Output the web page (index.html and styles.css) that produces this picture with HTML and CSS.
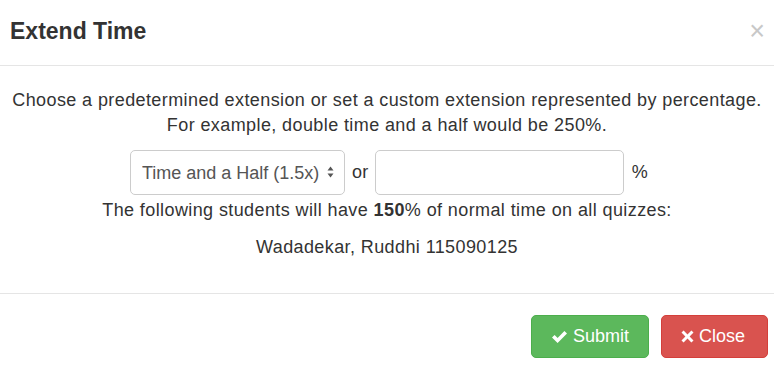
FILE: index.html
```html
<!DOCTYPE html>
<html lang="en">
<head>
    <meta charset="UTF-8">
    <title>Extend Time</title>
    <link rel="stylesheet" href="styles.css">
</head>
<body>
    <div class="modal">
        <!-- Cabeçalho -->
        <div class="modal-header">
            <h4 class="modal-title">Extend Time</h4>
            <button class="close" type="button">&times;</button>
        </div>

        <!-- Corpo -->
        <div class="modal-body">
            <p class="intro">Choose a predetermined extension or set a custom extension represented by percentage.<br>For example, double time and a half would be 250%.</p>

            <div class="extension-row">
                <div class="select-wrap">
                    <select class="form-control">
                        <option>Time and a Half (1.5x)</option>
                        <option>Double Time (2x)</option>
                    </select>
                    <svg class="select-arrows" width="7" height="12" viewBox="0 0 7 12">
                        <path d="M3.5 0.5 L6.5 4.5 H0.5 Z" fill="#555"/>
                        <path d="M3.5 11.5 L6.5 7.5 H0.5 Z" fill="#555"/>
                    </svg>
                </div>
                <span class="or">or</span>
                <input type="text" class="form-control custom">
                <span class="pct">%</span>
            </div>

            <p class="summary">The following students will have <b>150</b>% of normal time on all quizzes:</p>
            <p class="students">Wadadekar, Ruddhi 115090125</p>
        </div>

        <!-- Rodapé com os botões -->
        <div class="modal-footer">
            <button class="btn btn-success" type="button">
                <svg width="17" height="14" viewBox="0 0 17 14"><path d="M1 7.5 L3.6 5 L6.6 8 L13.4 1 L16 3.6 L6.6 13 Z" fill="#fff"/></svg>
                Submit
            </button>
            <button class="btn btn-danger" type="button">
                <svg width="13" height="13" viewBox="0 0 13 13"><path d="M2.6 0.5 L6.5 4.4 L10.4 0.5 L12.5 2.6 L8.6 6.5 L12.5 10.4 L10.4 12.5 L6.5 8.6 L2.6 12.5 L0.5 10.4 L4.4 6.5 L0.5 2.6 Z" fill="#fff"/></svg>
                Close
            </button>
        </div>
    </div>
</body>
</html>
```

FILE: styles.css
```css
body {
    margin: 0;
    font-family: "Liberation Sans", Arial, sans-serif;
    color: #333;
    background: #fff;
}

.modal {
    width: 774px;
    height: 368px;
    background: #fff;
}

/* Cabeçalho */
.modal-header {
    height: 66px;
    box-sizing: border-box;
    padding: 0 9px 0 10px;
    border-bottom: 1px solid #e5e5e5;
    display: flex;
    align-items: center;
    justify-content: space-between;
}

.modal-title {
    margin: 0;
    font-size: 23px;
    font-weight: bold;
    color: #333;
    padding-bottom: 2px;
}

.close {
    border: none;
    background: none;
    padding: 0 0 2px;
    font-family: "Liberation Sans", Arial, sans-serif;
    font-size: 27px;
    color: #c8c8c8;
    cursor: pointer;
}

/* Corpo */
.modal-body {
    height: 228px;
    box-sizing: border-box;
    padding: 22px 0 0;
    text-align: center;
    font-size: 18px;
    letter-spacing: 0.4px;
    border-bottom: 1px solid #e5e5e5;
}

.modal-body p {
    margin: 0;
    line-height: 25px;
}

.extension-row {
    display: flex;
    justify-content: center;
    align-items: center;
    margin-top: 12px;
    padding-left: 4px;
}

.select-wrap {
    position: relative;
}

.form-control {
    height: 45px;
    box-sizing: border-box;
    border: 1px solid #ccc;
    border-radius: 5px;
    background: #fff;
    font-family: "Liberation Sans", Arial, sans-serif;
    font-size: 18px;
    letter-spacing: 0;
    color: #555;
}

select.form-control {
    width: 215px;
    padding: 0 20px 0 11px;
    appearance: none;
    -webkit-appearance: none;
}

.select-arrows {
    position: absolute;
    right: 11px;
    top: 16px;
}

.or {
    margin: 0 6px 0 7px;
}

.custom {
    width: 249px;
    padding: 0 12px;
}

.pct {
    margin-left: 8px;
}

.summary {
    margin-top: 3px !important;
}

.students {
    margin-top: 12px !important;
}

/* Rodapé */
.modal-footer {
    display: flex;
    justify-content: flex-end;
    gap: 12px;
    padding: 21px 6px 0 0;
}

.btn {
    height: 43px;
    border-radius: 5px;
    font-family: "Liberation Sans", Arial, sans-serif;
    font-size: 18px;
    color: #fff;
    display: flex;
    align-items: center;
    gap: 5px;
    cursor: pointer;
}

.btn-success {
    width: 118px;
    padding: 0 0 0 19px;
    background-color: #5cb85c;
    border: 1px solid #4cae4c;
}

.btn-danger {
    width: 107px;
    padding: 0 0 0 19px;
    background-color: #d9534f;
    border: 1px solid #d43f3a;
}
```
